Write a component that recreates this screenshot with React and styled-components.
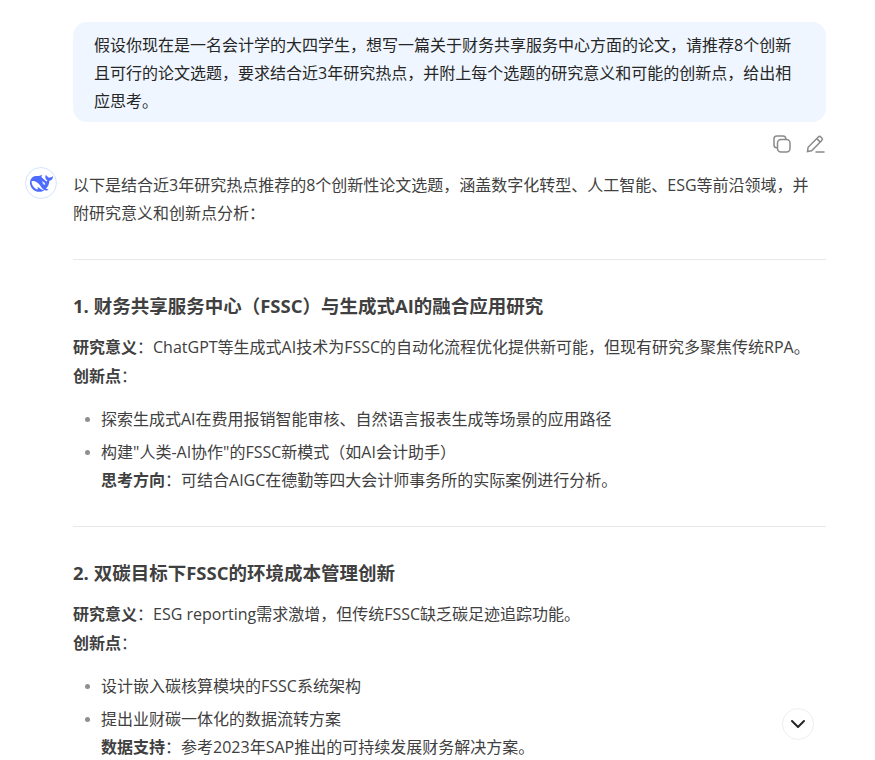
import React from "react";
import styled, { createGlobalStyle } from "styled-components";

const GlobalStyle = createGlobalStyle`
  html, body {
    margin: 0;
    padding: 0;
    height: 760px;
    overflow: hidden;
    background: #fff;
  }
  body {
    font-family: "Open Sans", "Noto Sans CJK SC", sans-serif;
    color: #404040;
    font-size: 16px;
    line-height: 28px;
  }
`;

const Page = styled.div`
  position: relative;
  height: 760px;
  overflow: hidden;
  padding: 22px 49px 0 25px;
`;

const UserRow = styled.div`
  margin-left: 48px;
`;

const Bubble = styled.div`
  background: #eff6ff;
  border-radius: 14px;
  padding: 9px 20px 7px 21px;
  color: #262626;
`;

const ActionRow = styled.div`
  display: flex;
  justify-content: flex-end;
  gap: 13px;
  height: 44px;
  padding: 12px 1px 0 0;
  box-sizing: border-box;
`;

const ActionIcon = styled.svg`
  width: 20px;
  height: 20px;
  fill: none;
  stroke: #8a8a8a;
  stroke-width: 1.5;
`;

const AnswerRow = styled.div`
  display: flex;
  gap: 16px;
`;

const Avatar = styled.div`
  flex: none;
  width: 32px;
  height: 32px;
  margin-top: 1px;
  border: 1px solid #d5e4ff;
  border-radius: 50%;
  box-sizing: border-box;
  display: flex;
  align-items: center;
  justify-content: center;
`;

const Answer = styled.div`
  flex: 1;
  min-width: 0;
  padding-top: 5px;
`;

const Intro = styled.p`
  margin: 0;
  max-width: 745px;
`;

const Para = styled.p`
  margin: 0;
  line-height: 29px;
`;

const Divider = styled.hr`
  border: 0;
  border-top: 1px solid #e8e8e8;
  margin: 32px 0 32px;
`;

const Heading = styled.h3`
  margin: 0 0 13px;
  font-size: 18.5px;
  line-height: 28px;
  font-weight: 700;
`;

const Strong = styled.strong`
  font-weight: 700;
`;

const List = styled.ul`
  list-style: none;
  margin: 14px 0 0;
  padding: 0 0 0 28px;
`;

const Item = styled.li`
  position: relative;
  margin-bottom: 5px;
  &::before {
    content: "";
    position: absolute;
    left: -16px;
    top: 12px;
    width: 5px;
    height: 5px;
    border-radius: 50%;
    background: #8f8f8f;
  }
`;

const ScrollButton = styled.button`
  position: absolute;
  left: 782px;
  top: 708px;
  width: 32px;
  height: 32px;
  padding: 0;
  border: 1px solid #eeeeee;
  border-radius: 50%;
  background: #fff;
  display: flex;
  align-items: center;
  justify-content: center;
`;

const Whale = () => (
  <svg width="23" height="23" viewBox="0 0 24 24">
    <path
      fill="#4d6bfe"
      d="M23.748 4.482c-.254-.124-.364.113-.512.234-.051.039-.094.09-.137.136-.372.397-.806.657-1.373.626-.829-.046-1.537.214-2.163.848-.133-.782-.575-1.248-1.247-1.548-.352-.156-.708-.311-.955-.65-.172-.241-.219-.51-.305-.774-.055-.16-.11-.323-.293-.35-.2-.031-.278.136-.356.276-.313.572-.434 1.202-.422 1.84.027 1.436.633 2.58 1.838 3.393.137.093.172.187.129.323-.082.28-.18.552-.266.833-.055.179-.137.217-.329.14a5.526 5.526 0 01-1.736-1.18c-.857-.828-1.631-1.742-2.597-2.458a11.365 11.365 0 00-.689-.471c-.985-.957.13-1.743.388-1.836.27-.098.093-.432-.779-.428-.872.004-1.67.295-2.687.684a3.055 3.055 0 01-.465.137 9.597 9.597 0 00-2.883-.102c-1.885.21-3.39 1.102-4.497 2.623C.082 8.606-.231 10.684.152 12.85c.403 2.284 1.569 4.175 3.36 5.653 1.858 1.533 3.997 2.284 6.438 2.14 1.482-.085 3.133-.284 4.994-1.86.47.234.962.327 1.78.397.63.059 1.236-.03 1.705-.128.735-.156.684-.837.419-.961-2.155-1.004-1.682-.595-2.113-.926 1.096-1.296 2.746-2.642 3.392-7.003.05-.347.007-.565 0-.845-.004-.17.035-.237.23-.256a4.173 4.173 0 001.545-.475c1.396-.763 1.96-2.015 2.093-3.517.02-.23-.004-.467-.247-.588zM11.581 18c-2.089-1.642-3.102-2.183-3.52-2.16-.392.024-.321.471-.235.763.09.288.207.486.371.739.114.167.192.416-.113.603-.673.416-1.842-.14-1.897-.167-1.361-.802-2.5-1.86-3.301-3.307-.774-1.393-1.224-2.887-1.298-4.482-.02-.386.093-.522.477-.592a4.696 4.696 0 011.529-.039c2.132.312 3.946 1.265 5.468 2.774.868.86 1.525 1.887 2.202 2.891.72 1.066 1.494 2.082 2.48 2.914.348.292.625.514.891.677-.802.09-2.14.11-3.054-.614zm1-6.44a.306.306 0 01.415-.287.302.302 0 01.2.288.306.306 0 01-.31.307.303.303 0 01-.304-.308zm3.11 1.596c-.2.081-.399.151-.59.16a1.245 1.245 0 01-.798-.254c-.274-.23-.47-.358-.552-.758a1.73 1.73 0 01.016-.588c.07-.327-.008-.537-.239-.727-.187-.156-.426-.199-.688-.199a.559.559 0 01-.254-.078c-.11-.054-.2-.19-.114-.358.028-.054.16-.186.192-.21.356-.202.767-.136 1.146.016.352.144.618.408 1.001.782.391.451.462.576.685.914.176.265.336.537.445.848.067.195-.019.354-.25.452z"
    />
  </svg>
);

const CopyIcon = () => (
  <ActionIcon viewBox="0 0 20 20">
    <rect x="5.500" y="5.500" width="12.500" height="12.500" rx="3.500" />
    <path d="M13.800 5.500V4.800A2.800 2.800 0 0 0 11 2H4.800A2.800 2.800 0 0 0 2 4.800V11a2.800 2.800 0 0 0 2.800 2.800h.7" />
  </ActionIcon>
);

const EditIcon = () => (
  <ActionIcon viewBox="0 0 20 20">
    <path d="M2.500 17.500l.6-4.200L13.300 3a1.800 1.800 0 0 1 2.500 0l1 1a1.800 1.800 0 0 1 0 2.500L6.600 16.800z" />
    <path d="M11.800 4.600l3.500 3.500" />
    <path d="M10.500 18h9" />
  </ActionIcon>
);

const ChevronDown = () => (
  <svg width="16" height="10" viewBox="0 0 16 10" fill="none" stroke="#262626" strokeWidth="2" strokeLinecap="round" strokeLinejoin="round">
    <path d="M2 2l6 6 6-6" />
  </svg>
);

const sections = [
  {
    title: "1. 财务共享服务中心（FSSC）与生成式AI的融合应用研究",
    meaning: "ChatGPT等生成式AI技术为FSSC的自动化流程优化提供新可能，但现有研究多聚焦传统RPA。",
    points: ["探索生成式AI在费用报销智能审核、自然语言报表生成等场景的应用路径", "构建\"人类-AI协作\"的FSSC新模式（如AI会计助手）"],
    noteLabel: "思考方向",
    note: "可结合AIGC在德勤等四大会计师事务所的实际案例进行分析。",
  },
  {
    title: "2. 双碳目标下FSSC的环境成本管理创新",
    meaning: "ESG reporting需求激增，但传统FSSC缺乏碳足迹追踪功能。",
    points: ["设计嵌入碳核算模块的FSSC系统架构", "提出业财碳一体化的数据流转方案"],
    noteLabel: "数据支持",
    note: "参考2023年SAP推出的可持续发展财务解决方案。",
  },
];

const App = () => {
  return (
    <Page>
      <GlobalStyle />
      <UserRow>
        <Bubble>
          假设你现在是一名会计学的大四学生，想写一篇关于财务共享服务中心方面的论文，请推荐8个创新且可行的论文选题，要求结合近3年研究热点，并附上每个选题的研究意义和可能的创新点，给出相应思考。
        </Bubble>
        <ActionRow>
          <CopyIcon />
          <EditIcon />
        </ActionRow>
      </UserRow>
      <AnswerRow>
        <Avatar>
          <Whale />
        </Avatar>
        <Answer>
          <Intro>以下是结合近3年研究热点推荐的8个创新性论文选题，涵盖数字化转型、人工智能、ESG等前沿领域，并附研究意义和创新点分析：</Intro>
          {sections.map((s) => (
            <section key={s.title}>
              <Divider />
              <Heading>{s.title}</Heading>
              <Para>
                <Strong>研究意义</Strong>：{s.meaning}
                <br />
                <Strong>创新点</Strong>：
              </Para>
              <List>
                {s.points.map((pt, i) => (
                  <Item key={pt}>
                    {pt}
                    {i === s.points.length - 1 && (
                      <>
                        <br />
                        <Strong>{s.noteLabel}</Strong>：{s.note}
                      </>
                    )}
                  </Item>
                ))}
              </List>
            </section>
          ))}
        </Answer>
      </AnswerRow>
      <ScrollButton>
        <ChevronDown />
      </ScrollButton>
    </Page>
  );
};

export default App;
